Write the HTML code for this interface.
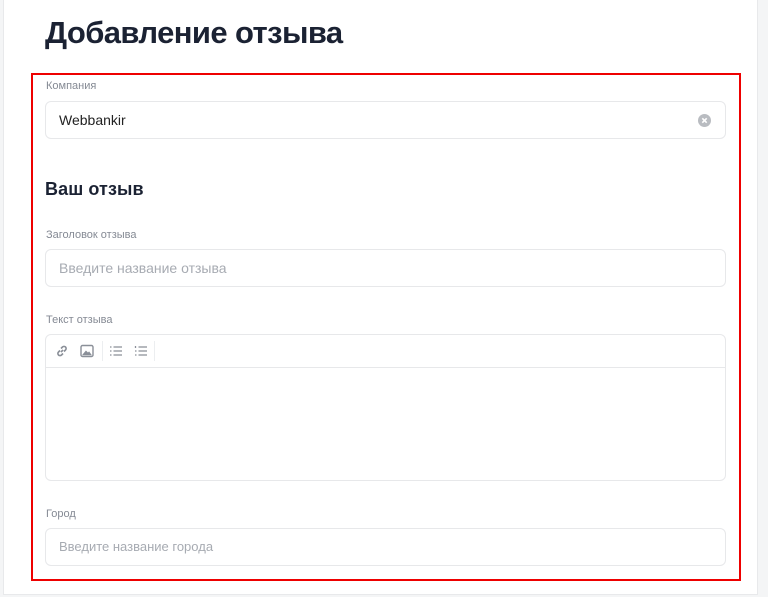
<!DOCTYPE html>
<html><head><meta charset="utf-8"><style>
*{box-sizing:border-box;margin:0;padding:0}
body{width:768px;height:597px;background:#f4f5f6;font-family:"Liberation Sans",sans-serif;position:relative;overflow:hidden}
.card{position:absolute;left:3px;top:-2px;width:755px;height:597px;background:#fff;border:1px solid #e8e9eb}
.abs{position:absolute}
h1{position:absolute;left:45px;top:15px;font-size:31px;font-weight:bold;color:#1b2233;letter-spacing:-0.6px}
.red{position:absolute;left:31px;top:73px;width:710px;height:508px;border:2px solid #ee0000}
.lbl{position:absolute;left:46px;font-size:11px;color:#858a94}
.inp{position:absolute;left:45px;width:681px;height:38px;border:1px solid #e7e8ea;border-radius:6px;font-size:14px;padding-left:13px;line-height:36px}
.ph{color:#a7abb2}
h2{position:absolute;left:45px;top:179px;font-size:18px;font-weight:bold;color:#1b2233;letter-spacing:0.1px}
</style></head><body>
<div class="card"></div>
<h1>Добавление отзыва</h1>
<div class="red"></div>
<div class="lbl" style="top:80px">Компания</div>
<div class="inp" style="top:101px;color:#222">Webbankir
<svg class="abs" style="left:652px;top:12px" width="13" height="13" viewBox="0 0 13 13"><circle cx="6.5" cy="6.5" r="6.5" fill="#b9bcc1"/><path d="M4.3 4.3L8.7 8.7M8.7 4.3L4.3 8.7" stroke="#fff" stroke-width="1.6"/></svg></div>
<h2>Ваш отзыв</h2>
<div class="lbl" style="top:229px">Заголовок отзыва</div>
<div class="inp ph" style="top:249px">Введите название отзыва</div>
<div class="lbl" style="top:314px">Текст отзыва</div>
<div class="inp" style="top:334px;height:147px;padding:0">
<div style="height:33px;border-bottom:1px solid #e7e8ea;position:relative">
<svg class="abs" style="left:9px;top:9px" width="14" height="14" viewBox="0 0 14 14" fill="none" stroke="#8a8f98" stroke-width="1.6"><path d="M6 8l2-2M5 6.5L3.5 8a2.1 2.1 0 003 3L8 9.5M9 7.5L10.5 6a2.1 2.1 0 00-3-3L6 4.5"/></svg>
<svg class="abs" style="left:34px;top:9px" width="14" height="14" viewBox="0 0 14 14" fill="none" stroke="#8a8f98" stroke-width="1.4"><rect x="1" y="1.5" width="12" height="11" rx="1.5"/><path d="M3.5 10.5l2.5-3 2 2 1-1 1.5 2z" fill="#8a8f98"/></svg>
<div class="abs" style="left:56px;top:6px;width:1px;height:20px;background:#eceef0"></div>
<svg class="abs" style="left:63px;top:10px" width="14" height="12" viewBox="0 0 14 12" stroke="#8a8f98" stroke-width="1.3"><path d="M1 2h1.5M1 6h1.5M1 10h1.5M4.5 2H13M4.5 6H13M4.5 10H13"/></svg>
<svg class="abs" style="left:88px;top:10px" width="14" height="12" viewBox="0 0 14 12" stroke="#8a8f98" stroke-width="1.3"><path d="M1.5 1v2M1 6h1.5M1 10h1.5M4.5 2H13M4.5 6H13M4.5 10H13"/></svg>
<div class="abs" style="left:108px;top:6px;width:1px;height:20px;background:#eceef0"></div>
</div></div>
<div class="lbl" style="top:508px">Город</div>
<div class="inp ph" style="top:528px;font-size:13px">Введите название города</div>
</body></html>
